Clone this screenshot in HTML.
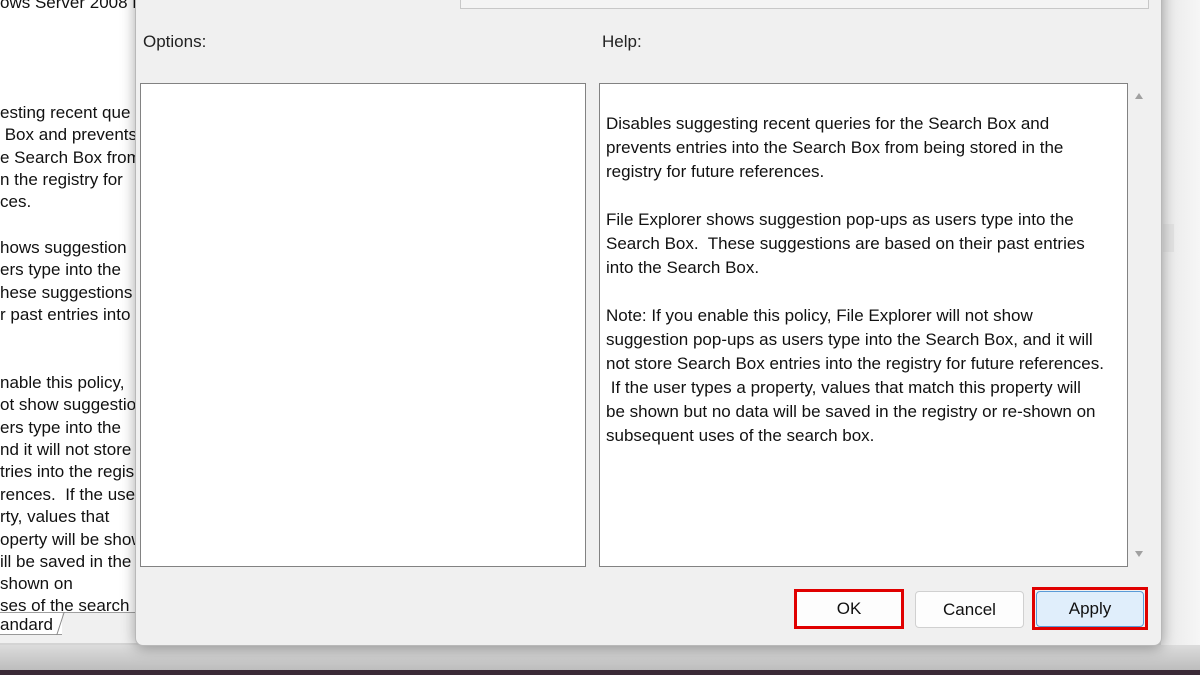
<!DOCTYPE html>
<html><head><style>
body{margin:0;width:1200px;height:675px;overflow:hidden;position:relative;background:#d4d4d4;font-family:"Liberation Sans",sans-serif;}
.abs{position:absolute}
#left{left:0;top:0;width:136px;height:612px;background:#fff;overflow:hidden}
#left div{position:absolute;left:0;white-space:nowrap;font-size:17px;color:#111;line-height:22px}
#right{left:1161px;top:0;width:39px;height:645px;background:linear-gradient(90deg,#e8e8e8,#f6f6f6)}
#dlg{left:135px;top:-20px;width:1025px;height:664px;background:#f0f0f0;border:1px solid #b8b8b8;border-radius:0 0 8px 8px;box-shadow:0 2px 14px rgba(0,0,0,.35)}
.box{position:absolute;background:#fff;border:1px solid #828282}
.help{font-size:17px;color:#111;line-height:24px;white-space:nowrap}
.btn{position:absolute;font-size:17px;text-align:center;color:#111;box-sizing:border-box;border-radius:4px}
</style></head><body>
<div class="abs" style="left:0;top:612px;width:140px;height:30px;background:#f0f0f0;border-top:1px solid #a0a0a0"></div>
<div class="abs" style="left:0;top:613px;width:62px;height:21px;background:#fff;border-bottom:1px solid #999;font-size:17px;line-height:24px;color:#111">andard</div>
<div class="abs" style="left:60px;top:612px;width:1px;height:23px;background:#888;transform:skewX(-18deg)"></div>
<div class="abs" style="left:0;top:645px;width:1200px;height:25px;background:linear-gradient(180deg,#dcdcdc,#bdbdbd)"></div>
<div class="abs" style="left:0;top:670px;width:1200px;height:5px;background:#3b2a37"></div>
<div id="left" class="abs">
<div style="top:-8px">ows Server 2008 R2</div>
<div style="top:102px">esting recent que</div>
<div style="top:124px">&nbsp;Box and prevents</div>
<div style="top:147px">e Search Box from</div>
<div style="top:169px">n the registry for</div>
<div style="top:191px">ces.</div>
<div style="top:237px">hows suggestion</div>
<div style="top:259px">ers type into the</div>
<div style="top:282px">hese suggestions</div>
<div style="top:304px">r past entries into</div>
<div style="top:372px">nable this policy,</div>
<div style="top:394px">ot show suggestio</div>
<div style="top:417px">ers type into the</div>
<div style="top:439px">nd it will not store</div>
<div style="top:461px">tries into the regis</div>
<div style="top:484px">rences.&nbsp; If the use</div>
<div style="top:506px">rty, values that</div>
<div style="top:529px">operty will be show</div>
<div style="top:551px">ill be saved in the</div>
<div style="top:573px">shown on</div>
<div style="top:595px">ses of the search b</div>
</div>
<div id="right" class="abs"><div class="abs" style="left:2px;top:224px;width:11px;height:28px;background:#e2e2e2"></div></div>
<div id="dlg" class="abs"></div>
<div class="abs" style="left:460px;top:0;width:687px;height:8px;background:#f4f4f4;border:1px solid #c8c8c8;border-top:none"></div>
<div class="abs" style="left:143px;top:32px;font-size:17px;color:#222">Options:</div>
<div class="abs" style="left:602px;top:32px;font-size:17px;color:#222">Help:</div>
<div class="box" style="left:140px;top:83px;width:444px;height:482px"></div>
<div class="box" style="left:599px;top:83px;width:527px;height:482px">
<div class="help" style="position:absolute;left:6px;top:28px">Disables suggesting recent queries for the Search Box and<br>prevents entries into the Search Box from being stored in the<br>registry for future references.<br><br>File Explorer shows suggestion pop-ups as users type into the<br>Search Box.&nbsp; These suggestions are based on their past entries<br>into the Search Box.<br><br>Note: If you enable this policy, File Explorer will not show<br>suggestion pop-ups as users type into the Search Box, and it will<br>not store Search Box entries into the registry for future references.<br>&nbsp;If the user types a property, values that match this property will<br>be shown but no data will be saved in the registry or re-shown on<br>subsequent uses of the search box.</div>
</div>
<div class="abs" style="left:1135px;top:93px;width:0;height:0;border-left:4px solid transparent;border-right:4px solid transparent;border-bottom:6px solid #a0a0a0"></div>
<div class="abs" style="left:1135px;top:551px;width:0;height:0;border-left:4px solid transparent;border-right:4px solid transparent;border-top:6px solid #a0a0a0"></div>
<div class="btn" style="left:794px;top:589px;width:110px;height:40px;border:3px solid #e00000;border-radius:0;background:#fdfdfd;line-height:34px">OK</div>
<div class="btn" style="left:915px;top:591px;width:109px;height:37px;border:1px solid #d0d0d0;background:#fdfdfd;line-height:35px">Cancel</div>
<div class="abs" style="left:1032px;top:587px;width:116px;height:43px;box-sizing:border-box;border:3px solid #e00000"></div>
<div class="btn" style="left:1036px;top:591px;width:108px;height:36px;border:1px solid #5a9bd8;background:#e0eefb;line-height:34px">Apply</div>
</body></html>
